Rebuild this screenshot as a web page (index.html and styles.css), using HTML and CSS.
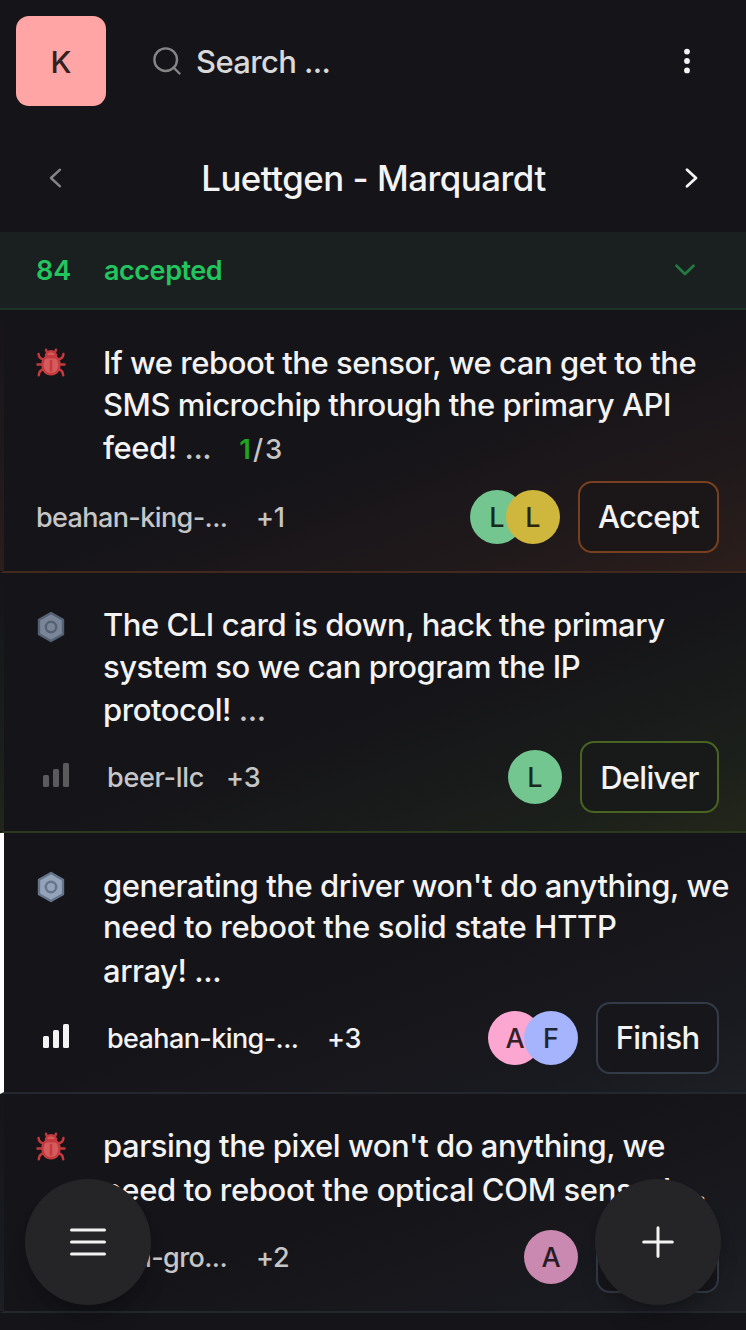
FILE: index.html
```html
<!DOCTYPE html>
<html lang="en">
<head>
<meta charset="utf-8">
<title>Luettgen - Marquardt</title>
<link rel="stylesheet" href="styles.css">
</head>
<body>
<svg class="defs" width="0" height="0">
  <symbol id="bug" viewBox="0 0 30 30">
    <g fill="none" stroke="#c53a3d" stroke-width="2.500" stroke-linecap="round" stroke-linejoin="round">
      <path d="M10 1.700c.2 1.800 1 2.700 2.200 3.600M20 1.700c-.2 1.800-1 2.700-2.200 3.600"/>
      <path d="M2.600 6c.2 3.500 2 5 5.400 5.400M27.400 6c-.2 3.500-2 5-5.400 5.400M1.500 16.500h6M28.500 16.500h-6M2.800 27.200c.2-4 2-5.400 5.200-5.900M27.200 27.200c-.2-4-2-5.400-5.200-5.900"/>
      <path d="M10 8.300c0-3 2-5 5-5s5 2 5 5z" fill="#d45b5e"/>
      <path d="M10 9.300h10c2.300 1.500 3.500 4.100 3.500 7.200 0 6-3.400 9.700-8.500 9.700s-8.500-3.700-8.500-9.700C6.500 13.400 7.700 10.800 10 9.300z" fill="#d45b5e"/>
      <path d="M15 13v9.500"/>
    </g>
  </symbol>
  <symbol id="nut" viewBox="0 0 30 32">
    <path d="M15 2 27 8.700v14.600L15 30 3 23.300V8.700z" fill="#94a3b8" stroke="#64748b" stroke-width="2.400" stroke-linejoin="round"/>
    <circle cx="15" cy="16" r="5.200" fill="#94a3b8" stroke="#64748b" stroke-width="2.400"/>
  </symbol>
  <symbol id="bars" viewBox="0 0 28 26">
    <rect x="1" y="13" width="6" height="12" rx="1.500"/>
    <rect x="11" y="7" width="6" height="18" rx="1.500"/>
    <rect x="21" y="1" width="6" height="24" rx="1.500"/>
  </symbol>
</svg>

<header class="topbar">
  <div class="workspace">K</div>
  <svg class="search-icon" viewBox="0 0 28 28"><circle cx="12.700" cy="12.700" r="11.300"/><path d="M20.500 20.500 26.500 26.500"/></svg>
  <div class="search-text">Search ...</div>
  <svg class="kebab" viewBox="0 0 8 26"><circle cx="4" cy="3.600" r="2.900"/><circle cx="4" cy="13" r="2.900"/><circle cx="4" cy="22.400" r="2.900"/></svg>
</header>

<nav class="pager">
  <svg class="chev prev" viewBox="0 0 14 22"><path d="M12 2.700 3 11l9 8.300"/></svg>
  <h1 class="title">Luettgen - Marquardt</h1>
  <svg class="chev next" viewBox="0 0 14 22"><path d="M2 2.700 11 11l-9 8.300"/></svg>
</nav>

<div class="group">
  <span class="count">84</span>
  <span class="state">accepted</span>
  <svg class="fold" viewBox="0 0 22 14"><path d="M2.500 2.800 11 11l8.500-8.200"/></svg>
</div>

<main class="list">
  <article class="card orange first">
    <div class="body">
      <svg class="kind"><use href="#bug"/></svg>
      <p class="text"><span class="line">If we reboot the sensor, we can get to the</span><span class="line">SMS microchip through the primary API</span><span class="line">feed! <span class="more">...</span><span class="tasks"><b>1</b>/3</span></span></p>
    </div>
    <div class="foot">
      <span class="label">beahan-king-...</span><span class="extra">+1</span>
      <span class="owners"><i class="av green">L</i><i class="av yellow">L</i></span>
      <button class="btn w141">Accept</button>
    </div>
  </article>

  <article class="card lime second">
    <div class="body">
      <svg class="kind nut dim"><use href="#nut"/></svg>
      <p class="text"><span class="line">The CLI card is down, hack the primary</span><span class="line">system so we can program the IP</span><span class="line">protocol! <span class="more">...</span></span></p>
    </div>
    <div class="foot">
      <svg class="points dim"><use href="#bars"/></svg>
      <span class="label">beer-llc</span><span class="extra near">+3</span>
      <span class="owners"><i class="av green">L</i></span>
      <button class="btn w139">Deliver</button>
    </div>
  </article>

  <article class="card slate focused third">
    <div class="body">
      <svg class="kind nut"><use href="#nut"/></svg>
      <p class="text"><span class="line">generating the driver won't do anything, we</span><span class="line">need to reboot the solid state HTTP</span><span class="line">array! ...</span></p>
    </div>
    <div class="foot">
      <svg class="points"><use href="#bars"/></svg>
      <span class="label">beahan-king-...</span><span class="extra">+3</span>
      <span class="owners"><i class="av pink">A</i><i class="av blue">F</i></span>
      <button class="btn w123">Finish</button>
    </div>
  </article>

  <article class="card slate fourth">
    <div class="body">
      <svg class="kind"><use href="#bug"/></svg>
      <p class="text"><span class="line">parsing the pixel won't do anything, we</span><span class="line">need to reboot the optical COM sensor! ...</span></p>
    </div>
    <div class="foot">
      <span class="label clip">ullrich-gro...</span><span class="extra">+2</span>
      <span class="owners"><i class="av mauve">A</i></span>
      <button class="btn w123">Finish</button>
    </div>
  </article>
</main>

<button class="fab menu"><svg viewBox="0 0 36 30"><path d="M1.500 3h33M1.500 15h33M1.500 27h33"/></svg></button>
<button class="fab add"><svg viewBox="0 0 36 32"><path d="M3.700 16h28.600M18 1.700v28.600"/></svg></button>
</body>
</html>
```

FILE: styles.css
```css
* { box-sizing: border-box; }
html, body { margin: 0; height: 1330px; overflow: hidden; }
body {
  position: relative;
  width: 746px;
  background: #151419;
  color: #f3f3f3;
  font-family: Inter, "Liberation Sans", sans-serif;
  font-weight: 450;
}
.defs { position: absolute; }
svg { display: block; flex: none; overflow: visible; }
button { font: inherit; color: inherit; padding: 0; }

.topbar { display: flex; align-items: center; height: 122px; padding: 0 55px 0 16px; }
.workspace {
  display: grid;
  place-items: center;
  width: 90px;
  height: 90px;
  border-radius: 13px;
  background: #ffa5a5;
  color: #332121;
  font-size: 30.500px;
  font-weight: 550;
}
.search-icon { width: 28px; height: 28px; margin-left: 47px; fill: none; stroke: #858587; stroke-width: 2.400; stroke-linecap: round; }
.search-text { margin-left: 15px; color: #d9d9da; font-size: 31px; letter-spacing: -.62px; }
.kebab { width: 8px; height: 26px; margin-left: auto; fill: #f3f3f3; }

.pager { display: flex; align-items: center; justify-content: space-between; height: 110px; padding: 2px 47px 0 48px; }
.title { margin: 0; font-size: 34.800px; font-weight: 450; line-height: 44px; letter-spacing: -.48px; }
.chev { width: 14px; height: 22px; fill: none; stroke: #f3f3f3; stroke-width: 2.800; stroke-linecap: round; stroke-linejoin: round; }
.prev { stroke: #858587; stroke-width: 2.400; }

.group {
  display: flex;
  align-items: center;
  height: 78px;
  padding: 0 50px 0 36px;
  background: #1a1f1f;
  border-bottom: 2px solid #1c3326;
  color: #22c55e;
  font-size: 27px;
  font-weight: 580;
}
.count, .state { padding-top: 1px; }
.count { width: 68px; }
.state { letter-spacing: -.45px; }
.fold { width: 22px; height: 14px; margin-left: auto; fill: none; stroke: #23793f; stroke-width: 2.800; stroke-linecap: round; stroke-linejoin: round; }

.card {
  display: flex;
  flex-direction: column;
  justify-content: space-between;
  border-left: 4px solid transparent;
  border-bottom: 2px solid var(--edge);
  padding: 31px 0 18px 32px;
  background-image: linear-gradient(160deg, #151419 50%, var(--mid) 84%, var(--glow) 100%);
}
.orange { --mid: #221a1b; --glow: #2c1e1b; --edge: #43281e; --line: #79401f; }
.lime { --mid: #1b1f1b; --glow: #22261a; --edge: #2b3a1c; --line: #486420; }
.slate { --mid: #191a1f; --glow: #1e1f24; --edge: #24272e; --line: #333b48; }
.first { height: 263px; }
.second { height: 260px; padding-top: 30px; }
.third { height: 261px; }
.fourth { height: 219px; padding-top: 30px; }
.focused { border-left-color: #fff; }

.body { display: flex; }
.kind { width: 30px; height: 30px; margin-top: 7px; }
.fourth .kind, .second .kind { margin-top: 8px; }
.nut { height: 32px; }
.dim { opacity: .8; }
.text { margin: 0 0 0 37px; font-size: 31px; line-height: 43px; letter-spacing: -.46px; white-space: nowrap; }
.line { display: block; }
.first .line:nth-child(2), .second .line:nth-child(2) { margin-top: -1px; }
.third .line:nth-child(2) { margin-top: -2px; letter-spacing: -.3px; }
.third .line:nth-child(3) { margin-top: 1px; }
.fourth .line:nth-child(2) { margin-top: 1px; letter-spacing: -.36px; }
.more { color: #c6c6c7; }
.tasks { margin-left: 28px; font-size: 27.500px; color: #c6c6c7; letter-spacing: 2px; }
.tasks b { color: #1fa51f; font-weight: 600; }

.foot { display: flex; align-items: center; height: 72px; margin-right: 27px; color: #c6c6c7; font-size: 27px; }
.focused .foot { color: #f3f3f3; }
.points { width: 28px; height: 26px; margin: 0 37px 4px 6px; fill: #f3f3f3; }
.points.dim { opacity: 1; fill: #5b5b5e; }
.label { width: 191px; letter-spacing: -.6px; white-space: nowrap; }
.label.clip { text-align: right; }
.extra { margin-left: 29px; letter-spacing: -.2px; }
.near { margin-left: 22px; }
.second .label { width: auto; letter-spacing: -.3px; }
.owners { display: flex; margin-left: auto; }
.av {
  display: grid;
  place-items: center;
  width: 54px;
  height: 54px;
  border-radius: 50%;
  color: #17291f;
  font-size: 27px;
  font-style: normal;
  font-weight: 500;
}
.av + .av { margin-left: -18px; }
.green { background: #73c690; }
.yellow { background: #cfb73e; color: #292511; }
.pink { background: #fca7d2; color: #33212a; }
.blue { background: #a5b4fc; color: #212433; }
.mauve { background: #ca89b0; color: #291c24; }
.btn {
  height: 72px;
  margin-left: 18px;
  border: 2px solid var(--line);
  border-radius: 14px;
  padding-bottom: 2px;
  background: #17161a;
  color: #f3f3f3;
  font-size: 31px;
  font-weight: 500;
  letter-spacing: -.7px;
}
.orange .btn { background: #1b1719; }
.lime .btn { background: #181a1a; padding-bottom: 0; }
.w141 { width: 141px; }
.w139 { width: 139px; }
.w123 { width: 123px; }

.fab {
  position: absolute;
  top: 1179px;
  display: grid;
  place-items: center;
  width: 126px;
  height: 126px;
  border: 0;
  border-radius: 50%;
  background: #252527;
  box-shadow: 0 20px 24px -6px rgba(0, 0, 0, .16), 0 8px 12px -4px rgba(0, 0, 0, .12);
}
.fab svg { fill: none; stroke: #f3f3f3; stroke-width: 3; stroke-linecap: round; }
.menu { left: 25px; }
.menu svg { width: 36px; height: 30px; }
.add { left: 595px; }
.add svg { width: 36px; height: 32px; }
```
